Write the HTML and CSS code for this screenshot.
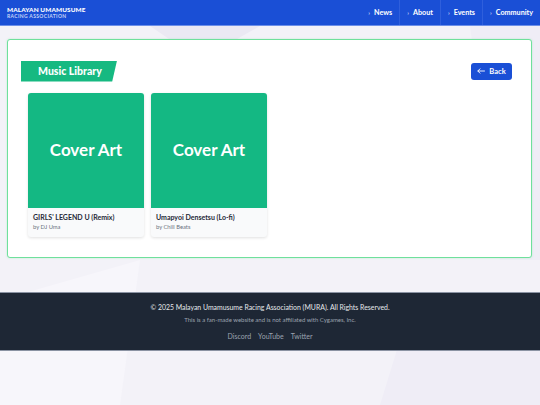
FILE: index.html
```html
<!DOCTYPE html>
<html>
<head>
<meta charset="utf-8">
<link rel="stylesheet" href="styles.css">
</head>
<body>
<div class="bg">
  <svg class="bg-shapes" width="540" height="405" viewBox="0 0 540 405">
    <polygon points="150,26 260,26 200,60" fill="#ebe9f3"/>
    <polygon points="0,300 140,260 120,405 0,405" fill="#f7f6fb"/>
    <polygon points="400,340 540,300 540,405 380,405" fill="#efedf6"/>
    <polygon points="470,26 540,26 540,260 500,260" fill="#efedf6"/>
  </svg>
</div>
<header class="topbar">
  <div class="brand">
    <div class="brand-title">MALAYAN UMAMUSUME</div>
    <div class="brand-sub">RACING ASSOCIATION</div>
  </div>
  <nav class="nav">
    <a class="nav-item first"><span class="chev">›</span>News</a>
    <a class="nav-item"><span class="chev">›</span>About</a>
    <a class="nav-item"><span class="chev">›</span>Events</a>
    <a class="nav-item"><span class="chev">›</span>Community</a>
  </nav>
</header>
<main class="main">
  <section class="panel">
    <div class="panel-head">
      <h1 class="banner"><span>Music Library</span></h1>
      <button class="back"><svg width="8" height="6" viewBox="0 0 8 6"><path d="M7.5 3H1M3 0.8L0.8 3L3 5.2" stroke="#fff" stroke-width="0.9" fill="none" stroke-linecap="round" stroke-linejoin="round"/></svg>Back</button>
    </div>
    <div class="grid">
      <div class="track">
        <div class="cover">Cover Art</div>
        <div class="info">
          <div class="t-title">GIRLS' LEGEND U (Remix)</div>
          <div class="t-artist">by DJ Uma</div>
        </div>
      </div>
      <div class="track">
        <div class="cover">Cover Art</div>
        <div class="info">
          <div class="t-title">Umapyoi Densetsu (Lo-fi)</div>
          <div class="t-artist">by Chill Beats</div>
        </div>
      </div>
    </div>
  </section>
</main>
<footer class="footer">
  <div class="f-copy">© 2025 Malayan Umamusume Racing Association (MURA). All Rights Reserved.</div>
  <div class="f-note">This is a fan-made website and is not affiliated with Cygames, Inc.</div>
  <div class="f-links"><a>Discord</a><a>YouTube</a><a>Twitter</a></div>
</footer>
</body>
</html>
```
FILE: styles.css
```css
* { box-sizing: border-box; margin: 0; padding: 0; }
html, body { width: 540px; height: 405px; overflow: hidden; }
body {
  font-family: "Lato", "Noto Sans", sans-serif;
  background: #f3f2f8;
  position: relative;
  color: #1f2937;
}
.bg { position: absolute; inset: 0; z-index: 0; }
.bg-shapes { display: block; }
.topbar, .main, .footer { position: relative; z-index: 1; }

.topbar {
  height: 26px;
  background: #1a4fd6;
  border-bottom: 1px solid #6d8fe8;
  display: flex;
  align-items: center;
  justify-content: space-between;
  padding-left: 7px;
  color: #fff;
}
.brand-title { font-size: 6.4px; font-weight: 900; letter-spacing: 0.1px; line-height: 7px; }
.brand-sub { font-size: 5px; font-weight: 700; letter-spacing: 0.35px; color: #c5d3f7; line-height: 6px; }
.nav { display: flex; height: 100%; align-items: stretch; }
.nav-item {
  display: flex; align-items: center;
  padding: 0 7px;
  font-size: 7.2px; font-weight: 700;
  border-left: 1px solid #2f5fdc;
  color: #fff;
}
.nav-item.first { border-left: none; }
.chev { font-size: 6px; margin-right: 4px; color: #d0dbf8; }

.main { padding: 13px 8px 0 7px; }
.panel {
  background: #fff;
  border: 1px solid #6fe09c;
  border-radius: 3px;
  padding: 20px 19px 20px 20px;
  height: 219px;
  box-shadow: 0 0 2px rgba(74, 222, 128, 0.35);
}
.panel-head { display: flex; justify-content: space-between; align-items: center; height: 22px; margin-bottom: 11px; }
.banner {
  margin-left: -7px;
  height: 21px;
  width: 96px;
  background: #16b981;
  clip-path: polygon(0 0, 100% 0, 95% 100%, 0 100%);
  color: #fff;
  font-size: 10.5px;
  font-weight: 900;
  display: flex; align-items: center;
  padding-left: 17px;
}
.back {
  font-family: inherit;
  background: #1a4fd6;
  color: #fff;
  border: none;
  border-radius: 3px;
  height: 17px;
  width: 41px;
  font-size: 7.5px;
  font-weight: 700;
  display: flex; align-items: center; justify-content: center; gap: 4px;
  margin-right: 0;
}
.grid { display: flex; gap: 7px; }
.track {
  width: 116px;
  border-radius: 3px;
  overflow: hidden;
  background: #f9fafb;
  box-shadow: 0 1px 3px rgba(0,0,0,0.12);
}
.cover {
  height: 115px;
  background: #14b883;
  color: #fff;
  font-family: "Lato", sans-serif;
  font-size: 17px;
  font-weight: 700;
  display: flex; align-items: center; justify-content: center;
  padding-bottom: 2px;
}
.info { padding: 5px 5px 6px; height: 29px; }
.t-title { font-size: 7px; font-weight: 700; color: #1f2937; line-height: 9px; }
.t-artist { font-size: 5.8px; color: #6b7280; line-height: 8px; margin-top: 1px; }

.footer {
  margin-top: 34px;
  height: 59px;
  background: #1e2735;
  border-top: 1px solid #8b93a3;
  border-bottom: 1px solid #8b93a3;
  text-align: center;
  padding-top: 10px;
}
.f-copy { font-size: 6.9px; color: #e5e7eb; line-height: 9px; }
.f-note { font-size: 6px; color: #9ca3af; line-height: 7px; margin-top: 4px; }
.f-links { font-size: 7px; margin-top: 9px; line-height: 9px; display: flex; justify-content: center; gap: 7px; }
.f-links a { color: #9ca3af; }
```
